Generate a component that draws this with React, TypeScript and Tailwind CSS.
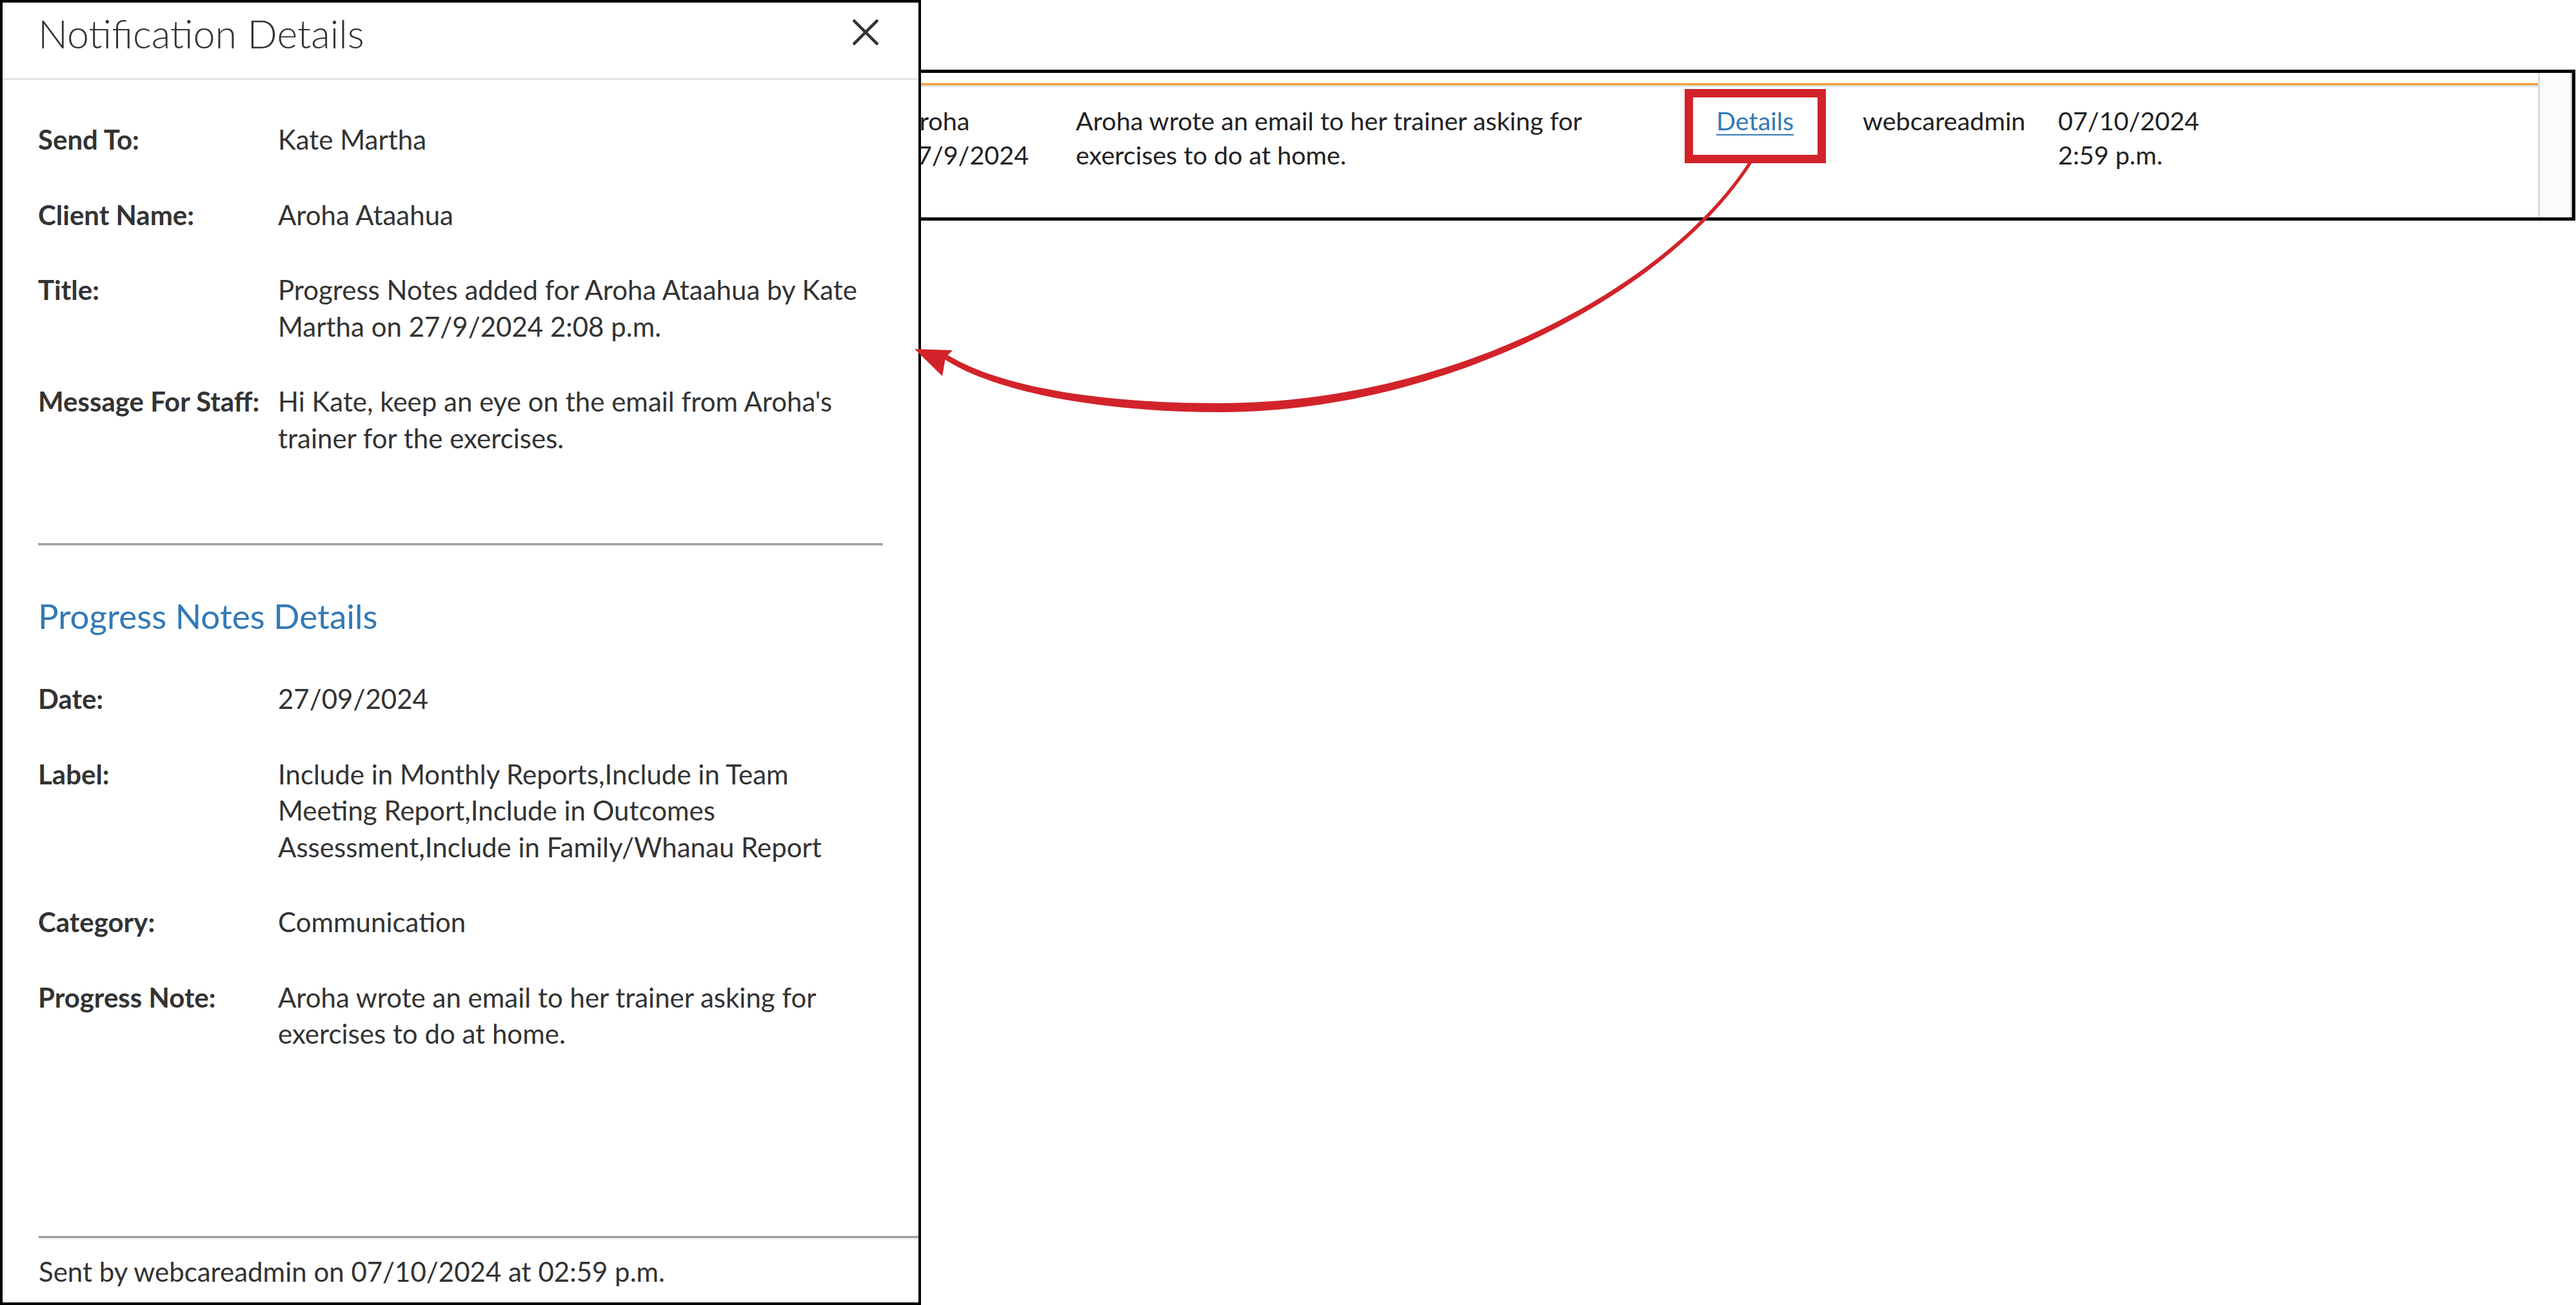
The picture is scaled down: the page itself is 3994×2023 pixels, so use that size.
import React from "react";

const font = "font-['Lato','Segoe_UI',sans-serif]";

const topRows = [
  { label: "Send To:", value: "Kate Martha" },
  { label: "Client Name:", value: "Aroha Ataahua" },
  { label: "Title:", value: "Progress Notes added for Aroha Ataahua by Kate Martha on 27/9/2024 2:08 p.m." },
  { label: "Message For Staff:", value: "Hi Kate, keep an eye on the email from Aroha's trainer for the exercises." },
];

const noteRows = [
  { label: "Date:", value: "27/09/2024" },
  {
    label: "Label:",
    value: "Include in Monthly Reports,Include in Team Meeting Report,Include in Outcomes Assessment,Include in Family/Whanau Report",
  },
  { label: "Category:", value: "Communication" },
  { label: "Progress Note:", value: "Aroha wrote an email to her trainer asking for exercises to do at home." },
];

function DetailRow({ label, value }: { label: string; value: string }) {
  return (
    <div className="mb-[60px] flex text-[42px] leading-[56.5px] text-[#333]">
      <div className="w-[372px] shrink-0 font-bold">{label}</div>
      <div className="flex-1">{value}</div>
    </div>
  );
}

function Divider() {
  return (
    <div>
      <div className="h-[3px] bg-[#9c9c9c]" />
      <div className="h-[2px] bg-[#e6e6e6]" />
    </div>
  );
}

function NotificationPanel() {
  return (
    <div className="absolute left-0 top-0 z-10 flex h-[2023px] w-[1428px] flex-col border-4 border-black bg-white">
      {/* header */}
      <div className="flex h-[120px] shrink-0 items-start justify-between border-b-[3px] border-[#e3e3e3] pl-[55px] pr-[62px]">
        <h2 className="pt-[12px] text-[61px] font-light leading-[72px] text-[#333]">Notification Details</h2>
        <button className="mt-[26px] text-[#333]">
          <svg width="40" height="40" viewBox="0 0 40 40">
            <path d="M1 1 L39 39 M39 1 L1 39" stroke="currentColor" strokeWidth="4.5" />
          </svg>
        </button>
      </div>

      {/* body */}
      <div className="px-[55px] pt-[64px]">
        {topRows.map((r) => (
          <DetailRow key={r.label} label={r.label} value={r.value} />
        ))}
        <div className="mt-[135px]">
          <Divider />
        </div>
        <h3 className="mt-[77px] mb-[69px] text-[53px] leading-[62px] text-[#337ab7]">Progress Notes Details</h3>
        {noteRows.map((r) => (
          <DetailRow key={r.label} label={r.label} value={r.value} />
        ))}
      </div>

      {/* footer */}
      <div className="mt-auto ml-[56px]">
        <Divider />
        <p className="pt-[22px] pb-[20px] text-[42px] leading-[56.5px] text-[#333]">
          Sent by webcareadmin on 07/10/2024 at 02:59 p.m.
        </p>
      </div>
    </div>
  );
}

function NotificationTable() {
  return (
    <div className="pl-[1300px] pr-px pt-[108px]">
      <div className="flex h-[234px] border-[5px] border-black bg-white">
        <div className="flex-1 border-r-[3px] border-[#dcdcdc]">
          <div className="h-[16px]" />
          <div className="h-[3px] bg-[#f39a2f]" />
          <div className="h-[3px] bg-[#e2e2e2]" />
          <div className="flex pl-[94px] pt-[25px] text-[39.5px] leading-[53px] text-[#222]">
            <div className="w-[269px]">
              <div>Aroha</div>
              <div>27/9/2024</div>
            </div>
            <div className="w-[993px]">
              <div className="max-w-[880px]">Aroha wrote an email to her trainer asking for exercises to do at home.</div>
            </div>
            <div className="w-[227px]">
              <a className="text-[#337ab7] underline decoration-2 underline-offset-[6px]">Details</a>
            </div>
            <div className="w-[303px]">webcareadmin</div>
            <div>
              <div>07/10/2024</div>
              <div>2:59 p.m.</div>
            </div>
          </div>
        </div>
        <div className="w-[50px] border-r-2 border-[#bdbdbd] bg-[#fcfcfc]" />
      </div>
    </div>
  );
}

function Annotation() {
  return (
    <svg className="pointer-events-none absolute left-0 top-0 z-20" width="3994" height="2023" viewBox="0 0 3994 2023">
      <rect x="2618.5" y="144.5" width="206" height="102" fill="none" stroke="#d2232a" strokeWidth="13" />
      <path
        d="M 2718 250 C 2589 455, 2242 638.5, 1892 639 C 1692 638.5, 1537.6 604.8, 1463.8 556.4 L 1468.2 549.6 C 1542.4 596.2, 1692 625.5, 1892 625 C 2242 625.5, 2583 451, 2712 250 Z"
        fill="#d2232a"
      />
      <polygon points="1418,541 1477,543 1466,554 1461,583" fill="#d2232a" />
    </svg>
  );
}

export default function App() {
  return (
    <div className={`relative h-[2023px] w-full overflow-hidden bg-white ${font}`}>
      <NotificationTable />
      <NotificationPanel />
      <Annotation />
    </div>
  );
}
